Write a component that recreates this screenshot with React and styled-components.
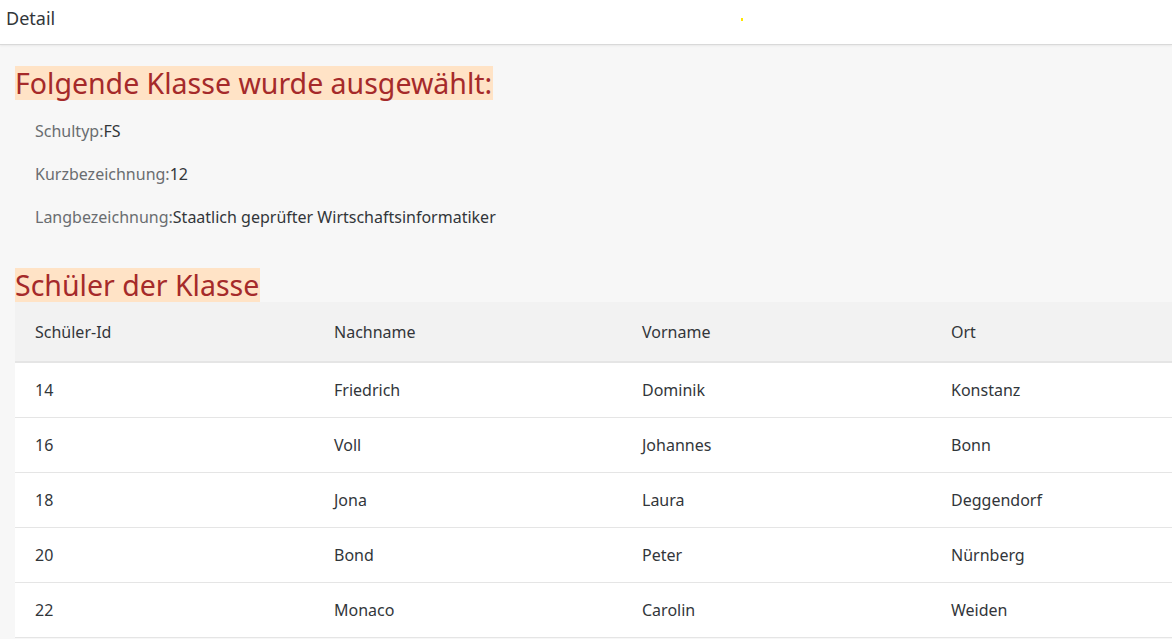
import styled, { createGlobalStyle } from "styled-components";

const GlobalStyle = createGlobalStyle`
  *, *::before, *::after {
    box-sizing: border-box;
  }
  html, body {
    margin: 0;
    padding: 0;
    background: #f7f7f7;
    overflow: hidden;
  }
  body {
    font-family: "Noto Sans", "Liberation Sans", sans-serif;
    color: #32363a;
  }
`;

const Page = styled.div`
  width: 1172px;
  height: 639px;
  display: flex;
  flex-direction: column;
  background: #f7f7f7;
`;

const TopBar = styled.header`
  height: 45px;
  flex: none;
  display: flex;
  align-items: flex-start;
  padding: 6px 0 0 6px;
  background: #fff;
  border-bottom: 1px solid #d9d9d9;
  box-shadow: 0 1px 2px rgba(0, 0, 0, 0.06);
  position: relative;
  font-size: 18px;
  line-height: 24px;
  color: #32363a;
`;

const Marker = styled.span`
  position: absolute;
  left: 741px;
  top: 18px;
  width: 2px;
  height: 3px;
  background: #ffe600;
`;

const Content = styled.main`
  padding: 21px 0 0 15px;
  display: flex;
  flex-direction: column;
`;

const Heading = styled.h2`
  align-self: flex-start;
  margin: 0;
  background: #ffe3c6;
  color: #a52a2a;
  font-weight: 400;
  font-size: 28.5px;
  line-height: 34px;
  height: 34px;
  padding-right: 1px;
`;

const FieldList = styled.div`
  display: flex;
  flex-direction: column;
  gap: 22px;
  padding: 21px 0 40px 20px;
`;

const Field = styled.div`
  font-size: 16px;
  line-height: 21px;
`;

const Label = styled.span`
  color: #6a6d70;
`;

const Value = styled.span`
  color: #32363a;
`;

const Table = styled.div`
  display: flex;
  flex-direction: column;
  background: #fff;
`;

const Row = styled.div`
  display: grid;
  grid-template-columns: 299px 308px 309px 1fr;
  height: ${(p) => (p.header ? "61px" : "55px")};
  align-items: center;
  background: ${(p) => (p.header ? "#f2f2f2" : "#fff")};
  border-bottom: ${(p) => (p.header ? "2px solid #e5e5e5" : "1px solid #e5e5e5")};
  font-size: 16px;
  color: #32363a;
`;

const Cell = styled.div`
  padding-left: 20px;
  white-space: nowrap;
`;

const fields = [
  ["Schultyp:", "FS"],
  ["Kurzbezeichnung:", "12"],
  ["Langbezeichnung:", "Staatlich geprüfter Wirtschaftsinformatiker"],
];

const students = [
  ["14", "Friedrich", "Dominik", "Konstanz"],
  ["16", "Voll", "Johannes", "Bonn"],
  ["18", "Jona", "Laura", "Deggendorf"],
  ["20", "Bond", "Peter", "Nürnberg"],
  ["22", "Monaco", "Carolin", "Weiden"],
];

export default function App() {
  return (
    <>
      <GlobalStyle />
      <Page>
        <TopBar>
          Detail
          <Marker />
        </TopBar>
        <Content>
          <Heading>Folgende Klasse wurde ausgewählt:</Heading>
          <FieldList>
            {fields.map(([label, value]) => (
              <Field key={label}>
                <Label>{label}</Label>
                <Value>{value}</Value>
              </Field>
            ))}
          </FieldList>
          <Heading>Schüler der Klasse</Heading>
          <Table>
            <Row header>
              <Cell>Schüler-Id</Cell>
              <Cell>Nachname</Cell>
              <Cell>Vorname</Cell>
              <Cell>Ort</Cell>
            </Row>
            {students.map((s) => (
              <Row key={s[0]}>
                {s.map((v, i) => (
                  <Cell key={i}>{v}</Cell>
                ))}
              </Row>
            ))}
          </Table>
        </Content>
      </Page>
    </>
  );
}
